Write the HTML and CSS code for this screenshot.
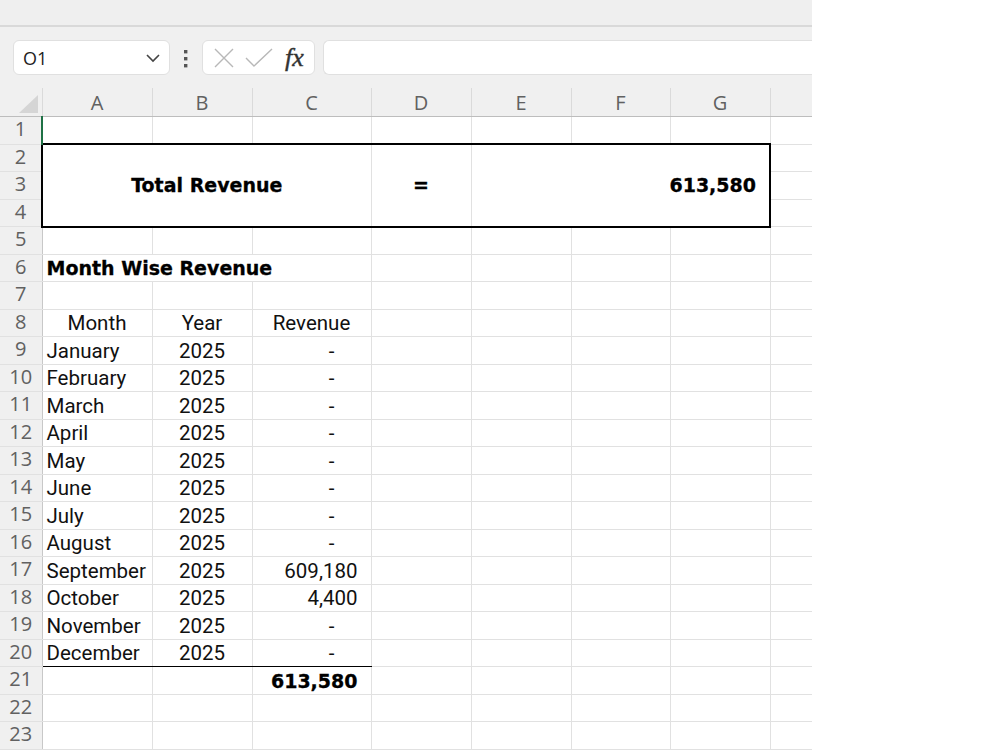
FILE: index.html
```html
<!DOCTYPE html>
<html lang="en">
<head>
    <meta charset="UTF-8">
    <meta name="viewport" content="width=device-width, initial-scale=1.0">
    <title>Revenue Sheet</title>
    <link rel="stylesheet" href="styles.css">
</head>
<body>
    <div class="app">
        <div class="top-band"></div>

        <!-- Name box + formula bar -->
        <div class="formula-bar">
            <div class="name-box">
                <span>O1</span>
                <svg width="16" height="10" viewBox="0 0 16 10"><path d="M2 2 L8 8 L14 2" fill="none" stroke="#444" stroke-width="1.6"/></svg>
            </div>
            <div class="dots">
                <svg width="6" height="20" viewBox="0 0 6 20"><rect x="1" y="1" width="3.4" height="3.4" fill="#555"/><rect x="1" y="8" width="3.4" height="3.4" fill="#555"/><rect x="1" y="15" width="3.4" height="3.4" fill="#555"/></svg>
            </div>
            <div class="fx-box">
                <svg width="22" height="20" viewBox="0 0 22 20"><path d="M2 1 L20 19 M20 1 L2 19" fill="none" stroke="#b8b8b8" stroke-width="1.4"/></svg>
                <svg width="28" height="20" viewBox="0 0 28 20"><path d="M1 10 L9 18 L27 1" fill="none" stroke="#b8b8b8" stroke-width="1.4"/></svg>
                <span class="fx">fx</span>
            </div>
            <div class="formula-input"></div>
        </div>

        <!-- Grid -->
        <div class="sheet">
            <table>
                <colgroup>
                    <col style="width:42px">
                    <col style="width:110px">
                    <col style="width:100px">
                    <col style="width:119px">
                    <col style="width:100px">
                    <col style="width:100px">
                    <col style="width:99px">
                    <col style="width:100px">
                    <col style="width:100px">
                </colgroup>
                <thead>
                    <tr class="col-heads">
                        <th class="corner"><div class="tri"></div></th>
                        <th>A</th><th>B</th><th>C</th><th>D</th><th>E</th><th>F</th><th>G</th><th></th>
                    </tr>
                </thead>
                <tbody>
                    <tr><th class="active">1</th><td></td><td></td><td></td><td></td><td></td><td></td><td></td><td></td></tr>
                    <tr>
                        <th>2</th>
                        <td class="box box-left bold center" colspan="3" rowspan="3">Total Revenue</td>
                        <td class="box box-mid bold center" rowspan="3">=</td>
                        <td class="box box-right bold right" colspan="3" rowspan="3">613,580</td>
                        <td></td>
                    </tr>
                    <tr><th>3</th><td></td></tr>
                    <tr><th>4</th><td></td></tr>
                    <tr><th>5</th><td></td><td></td><td></td><td></td><td></td><td></td><td></td><td></td></tr>
                    <tr><th>6</th><td class="bold" colspan="3">Month Wise Revenue</td><td></td><td></td><td></td><td></td><td></td></tr>
                    <tr><th>7</th><td></td><td></td><td></td><td></td><td></td><td></td><td></td><td></td></tr>
                    <tr><th>8</th><td class="center">Month</td><td class="center">Year</td><td class="center">Revenue</td><td></td><td></td><td></td><td></td><td></td></tr>
                    <tr><th>9</th><td>January</td><td class="center">2025</td><td class="dash">-</td><td></td><td></td><td></td><td></td><td></td></tr>
                    <tr><th>10</th><td>February</td><td class="center">2025</td><td class="dash">-</td><td></td><td></td><td></td><td></td><td></td></tr>
                    <tr><th>11</th><td>March</td><td class="center">2025</td><td class="dash">-</td><td></td><td></td><td></td><td></td><td></td></tr>
                    <tr><th>12</th><td>April</td><td class="center">2025</td><td class="dash">-</td><td></td><td></td><td></td><td></td><td></td></tr>
                    <tr><th>13</th><td>May</td><td class="center">2025</td><td class="dash">-</td><td></td><td></td><td></td><td></td><td></td></tr>
                    <tr><th>14</th><td>June</td><td class="center">2025</td><td class="dash">-</td><td></td><td></td><td></td><td></td><td></td></tr>
                    <tr><th>15</th><td>July</td><td class="center">2025</td><td class="dash">-</td><td></td><td></td><td></td><td></td><td></td></tr>
                    <tr><th>16</th><td>August</td><td class="center">2025</td><td class="dash">-</td><td></td><td></td><td></td><td></td><td></td></tr>
                    <tr><th>17</th><td>September</td><td class="center">2025</td><td class="num">609,180</td><td></td><td></td><td></td><td></td><td></td></tr>
                    <tr><th>18</th><td>October</td><td class="center">2025</td><td class="num">4,400</td><td></td><td></td><td></td><td></td><td></td></tr>
                    <tr><th>19</th><td>November</td><td class="center">2025</td><td class="dash">-</td><td></td><td></td><td></td><td></td><td></td></tr>
                    <tr><th>20</th><td class="rule">December</td><td class="center rule">2025</td><td class="dash rule">-</td><td></td><td></td><td></td><td></td><td></td></tr>
                    <tr><th>21</th><td></td><td></td><td class="num bold">613,580</td><td></td><td></td><td></td><td></td><td></td></tr>
                    <tr><th>22</th><td></td><td></td><td></td><td></td><td></td><td></td><td></td><td></td></tr>
                    <tr><th>23</th><td></td><td></td><td></td><td></td><td></td><td></td><td></td><td></td></tr>
                    <tr><th></th><td></td><td></td><td></td><td></td><td></td><td></td><td></td><td></td></tr>
                </tbody>
            </table>
        </div>
    </div>
</body>
</html>
```

FILE: styles.css
```css
body {
    margin: 0;
    background: #ffffff;
    font-family: Roboto, "Liberation Sans", sans-serif;
}

.app {
    width: 812px;
    height: 750px;
    overflow: hidden;
    background: #f0f0f0;
}

.top-band {
    height: 25px;
    background: #efefef;
    border-bottom: 2px solid #d9d9d9;
}

.formula-bar {
    display: flex;
    align-items: center;
    height: 35px;
    padding: 13px 0 13px 13px;
}

.name-box {
    width: 157px;
    height: 35px;
    box-sizing: border-box;
    display: flex;
    align-items: center;
    justify-content: space-between;
    padding: 0 8px 0 9px;
    background: #fff;
    border: 1px solid #e0e0e0;
    border-radius: 6px;
    font-family: "Open Sans", sans-serif;
    font-size: 18px;
    color: #222;
}

.dots {
    width: 32px;
    display: flex;
    justify-content: center;
    padding-top: 2px;
}

.fx-box {
    width: 113px;
    height: 35px;
    box-sizing: border-box;
    display: flex;
    align-items: center;
    gap: 10px;
    padding-left: 10px;
    background: #fff;
    border: 1px solid #e0e0e0;
    border-radius: 6px;
}

.fx {
    font-family: "Liberation Serif", serif;
    font-style: italic;
    font-size: 26px;
    color: #333;
    margin-left: 2px;
    -webkit-text-stroke: 0.4px #333;
}

.formula-input {
    flex: 1;
    height: 35px;
    margin-left: 8px;
    box-sizing: border-box;
    background: #fff;
    border: 1px solid #e0e0e0;
    border-right: none;
    border-radius: 6px 0 0 6px;
}

.sheet {
    background: #fff;
}

table {
    border-collapse: collapse;
    table-layout: fixed;
    width: 870px;
}

th {
    background: #f0f0f0;
    font-family: "Open Sans", sans-serif;
    font-weight: normal;
    font-size: 20px;
    color: #616161;
    padding: 0;
    text-align: center;
}

.col-heads th {
    height: 28px;
    border-left: 1px solid #dadada;
    border-bottom: 1px solid #bdbdbd;
    line-height: 27px;
    padding-top: 0;
}

.col-heads th.corner {
    border-left: none;
    position: relative;
}

.tri {
    position: absolute;
    right: 4px;
    bottom: 3px;
    width: 0;
    height: 0;
    border-left: 19px solid transparent;
    border-bottom: 18px solid #d5d5d5;
}

tbody tr {
    height: 27.5px;
}

tbody th {
    border-right: 1px solid #c8c8c8;
    border-bottom: 1px solid #e1e1e1;
    line-height: 20px;
    vertical-align: middle;
    padding-bottom: 2px;
}

tbody th.active {
    border-right: 2px solid #1e7145;
}

td {
    border: 1px solid #e1e1e1;
    padding: 0 4px 1px 4px;
    font-size: 20.5px;
    line-height: 24px;
    color: #111;
    vertical-align: bottom;
    white-space: nowrap;
    overflow: hidden;
}

.bold {
    font-family: "DejaVu Sans", Verdana, sans-serif;
    font-weight: bold;
    font-size: 19px;
    color: #000;
    -webkit-text-stroke: 0.3px #000;
}

.center {
    text-align: center;
}

.right {
    text-align: right;
    padding-right: 13px;
}

.num {
    text-align: right;
    padding-right: 13px;
}

.dash {
    text-align: right;
    padding-right: 36px;
}

.box {
    vertical-align: middle;
    border-top: 2px solid #000;
    border-bottom: 2px solid #000;
}

.box-left {
    border-left: 2px solid #000;
}

.box-right {
    border-right: 2px solid #000;
}

td.rule {
    border-bottom: 1px solid #000;
}
```
